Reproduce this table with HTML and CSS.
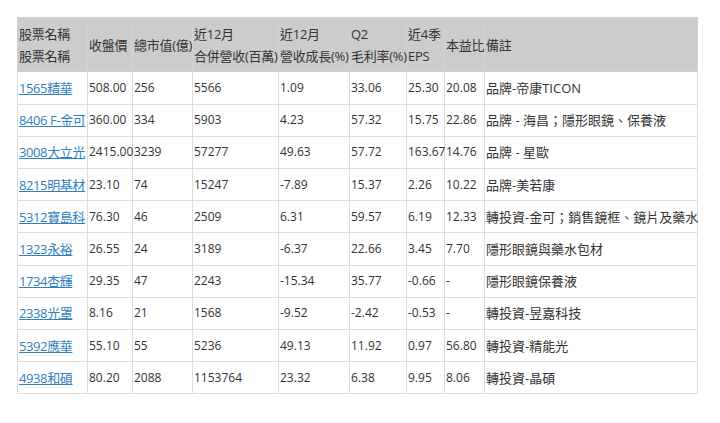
FILE: index.html
```html
<!DOCTYPE html>
<html lang="zh-Hant">
<head>
<meta charset="utf-8">
<title>股票列表</title>
<link rel="stylesheet" href="styles.css">
</head>
<body>
<div class="wrap">
<table class="stocks">
<colgroup>
<col class="c1"><col class="c2"><col class="c3"><col class="c4"><col class="c5"><col class="c6"><col class="c7"><col class="c8"><col class="c9">
</colgroup>
<thead>
<tr>
<th>股票名稱<br>股票名稱</th>
<th>收盤價</th>
<th>總市值(億)</th>
<th>近12月<br>合併營收(百萬)</th>
<th>近12月<br>營收成長(%)</th>
<th>Q2<br>毛利率(%)</th>
<th>近4季<br>EPS</th>
<th>本益比</th>
<th>備註</th>
</tr>
</thead>
<tbody>
<tr><td><a href="#">1565精華</a></td><td class="n">508.00</td><td class="n">256</td><td class="n">5566</td><td class="n">1.09</td><td class="n">33.06</td><td class="n">25.30</td><td class="n">20.08</td><td>品牌-帝康TICON</td></tr>
<tr><td><a href="#">8406 F-金可</a></td><td class="n">360.00</td><td class="n">334</td><td class="n">5903</td><td class="n">4.23</td><td class="n">57.32</td><td class="n">15.75</td><td class="n">22.86</td><td>品牌 - 海昌；隱形眼鏡、保養液</td></tr>
<tr><td><a href="#">3008大立光</a></td><td class="n">2415.00</td><td class="n">3239</td><td class="n">57277</td><td class="n">49.63</td><td class="n">57.72</td><td class="n">163.67</td><td class="n">14.76</td><td>品牌 - 星歐</td></tr>
<tr><td><a href="#">8215明基材</a></td><td class="n">23.10</td><td class="n">74</td><td class="n">15247</td><td class="n">-7.89</td><td class="n">15.37</td><td class="n">2.26</td><td class="n">10.22</td><td>品牌-美若康</td></tr>
<tr><td><a href="#">5312寶島科</a></td><td class="n">76.30</td><td class="n">46</td><td class="n">2509</td><td class="n">6.31</td><td class="n">59.57</td><td class="n">6.19</td><td class="n">12.33</td><td>轉投資-金可；銷售鏡框、鏡片及藥水</td></tr>
<tr><td><a href="#">1323永裕</a></td><td class="n">26.55</td><td class="n">24</td><td class="n">3189</td><td class="n">-6.37</td><td class="n">22.66</td><td class="n">3.45</td><td class="n">7.70</td><td>隱形眼鏡與藥水包材</td></tr>
<tr><td><a href="#">1734杏輝</a></td><td class="n">29.35</td><td class="n">47</td><td class="n">2243</td><td class="n">-15.34</td><td class="n">35.77</td><td class="n">-0.66</td><td class="n">-</td><td>隱形眼鏡保養液</td></tr>
<tr><td><a href="#">2338光罩</a></td><td class="n">8.16</td><td class="n">21</td><td class="n">1568</td><td class="n">-9.52</td><td class="n">-2.42</td><td class="n">-0.53</td><td class="n">-</td><td>轉投資-昱嘉科技</td></tr>
<tr><td><a href="#">5392應華</a></td><td class="n">55.10</td><td class="n">55</td><td class="n">5236</td><td class="n">49.13</td><td class="n">11.92</td><td class="n">0.97</td><td class="n">56.80</td><td>轉投資-精能光</td></tr>
<tr><td><a href="#">4938和碩</a></td><td class="n">80.20</td><td class="n">2088</td><td class="n">1153764</td><td class="n">23.32</td><td class="n">6.38</td><td class="n">9.95</td><td class="n">8.06</td><td>轉投資-晶碩</td></tr>
</tbody>
</table>
</div>
</body>
</html>
```

FILE: styles.css
```css
html, body {
  margin: 0;
  padding: 0;
  background: #ffffff;
}

.wrap {
  padding: 17px 0 0 17px;
}

.stocks {
  border-collapse: collapse;
  table-layout: fixed;
  width: 680px;
  font-family: "Open Sans", "Noto Sans CJK TC", sans-serif;
  font-size: 13px;
  line-height: 22.2px;
  color: #333333;
}

.c1 { width: 70px; }
.c2 { width: 45px; }
.c3 { width: 60px; }
.c4 { width: 86px; }
.c5 { width: 71px; }
.c6 { width: 57px; }
.c7 { width: 38px; }
.c8 { width: 40px; }
.c9 { width: 213px; }

.stocks th {
  background: #cccccc;
  border: 1px solid #d2d2d2;
  font-weight: normal;
  text-align: left;
  vertical-align: middle;
  padding: 4.5px 1px;
  white-space: nowrap;
  overflow: visible;
  letter-spacing: -0.25px;
}

.stocks td {
  border: 1px solid #dddddd;
  padding: 4.5px 1px;
  vertical-align: middle;
  white-space: nowrap;
  overflow: visible;
}

.stocks td.n {
  font-size: 12px;
}

.stocks a {
  color: #2f7fc1;
  text-decoration: underline;
  letter-spacing: -0.4px;
}
```
